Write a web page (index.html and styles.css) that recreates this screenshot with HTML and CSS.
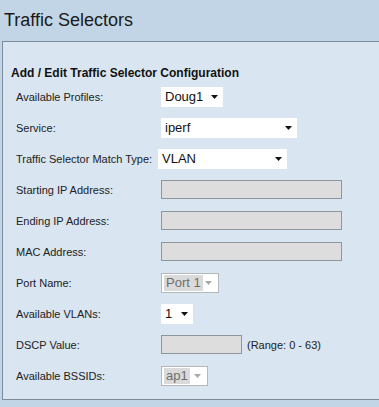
FILE: index.html
```html
<!DOCTYPE html>
<html lang="en">
<head>
    <meta charset="UTF-8">
    <title>Traffic Selectors</title>
    <link rel="stylesheet" href="styles.css">
</head>
<body>
    <h1 class="page-title">Traffic Selectors</h1>

    <div class="panel">
        <h2 class="panel-heading">Add / Edit Traffic Selector Configuration</h2>

        <div class="form">
            <div class="label">Available Profiles:</div>
            <div class="select select-profile">
                <span class="value">Doug1</span>
                <svg class="caret" width="7" height="4" viewBox="0 0 7 4"><polygon points="0,0 7,0 3.5,4"/></svg>
            </div>

            <div class="label">Service:</div>
            <div class="select select-service">
                <span class="value">iperf</span>
                <svg class="caret" width="7" height="4" viewBox="0 0 7 4"><polygon points="0,0 7,0 3.5,4"/></svg>
            </div>

            <div class="label">Traffic Selector Match Type:</div>
            <div class="select select-match">
                <span class="value">VLAN</span>
                <svg class="caret" width="7" height="4" viewBox="0 0 7 4"><polygon points="0,0 7,0 3.5,4"/></svg>
            </div>

            <div class="label">Starting IP Address:</div>
            <div class="field"></div>

            <div class="label">Ending IP Address:</div>
            <div class="field"></div>

            <div class="label">MAC Address:</div>
            <div class="field"></div>

            <div class="label">Port Name:</div>
            <div class="select select-port disabled">
                <span class="value">Port 1</span>
                <svg class="caret" width="7" height="4" viewBox="0 0 7 4"><polygon points="0,0 7,0 3.5,4"/></svg>
            </div>

            <div class="label">Available VLANs:</div>
            <div class="select select-vlan">
                <span class="value">1</span>
                <svg class="caret" width="7" height="4" viewBox="0 0 7 4"><polygon points="0,0 7,0 3.5,4"/></svg>
            </div>

            <div class="label">DSCP Value:</div>
            <div class="field-row">
                <div class="field field-short"></div>
                <span class="hint">(Range: 0 - 63)</span>
            </div>

            <div class="label">Available BSSIDs:</div>
            <div class="select select-bssid disabled">
                <span class="value">ap1</span>
                <svg class="caret" width="7" height="4" viewBox="0 0 7 4"><polygon points="0,0 7,0 3.5,4"/></svg>
            </div>
        </div>
    </div>
</body>
</html>
```

FILE: styles.css
```css
* {
    box-sizing: border-box;
}

body {
    margin: 0;
    background: #c2d5e6;
    font-family: "Liberation Sans", Arial, sans-serif;
    color: #222;
}

.page-title {
    height: 41px;
    margin: 0;
    padding-left: 4px;
    font-size: 18px;
    font-weight: normal;
    line-height: 40px;
    color: #1a1a1a;
}

.panel {
    height: 359px;
    margin-left: 2px;
    padding: 24px 0 0 8px;
    background: #d9e5f0;
    border: 1px solid #7d8c9b;
    border-right: none;
}

.panel-heading {
    margin: 0 0 1px;
    font-size: 12px;
    font-weight: bold;
    line-height: 14px;
    color: #111;
}

.form {
    display: grid;
    grid-template-columns: 145px auto;
    grid-auto-rows: 31px;
    align-items: center;
    padding-left: 5px;
}

.label {
    font-size: 11px;
    color: #222;
}

.select {
    display: flex;
    align-items: center;
    justify-content: space-between;
    justify-self: start;
    height: 20px;
    padding: 0 5px 0 4px;
    background: #fff;
    font-size: 13px;
    color: #111;
}

.caret {
    fill: #111;
    flex-shrink: 0;
}

.select-profile { width: 62px; }
.select-service { width: 136px; }
.select-match { width: 129px; margin-left: -3px; }
.select-vlan { width: 32px; }
.select-port { width: 58px; }
.select-bssid { width: 47px; }

.select.disabled {
    padding-left: 2px;
    padding-right: 6px;
    border: 1px solid #b3b8bd;
}

.select.disabled .value {
    padding: 0 2px;
    background: #dadada;
    color: #6e6e6e;
    line-height: 16px;
}

.select.disabled .caret {
    fill: #a9a9a9;
}

.field {
    width: 181px;
    height: 19px;
    background: #dddddd;
    border: 1px solid #8f969c;
}

.field-row {
    display: flex;
    align-items: center;
}

.field-short {
    width: 81px;
}

.hint {
    margin-left: 5px;
    font-size: 11px;
    color: #222;
}
```
